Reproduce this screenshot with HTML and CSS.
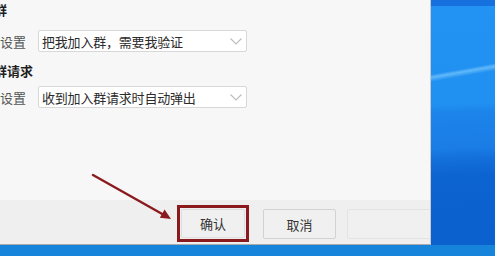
FILE: index.html
```html
<!DOCTYPE html>
<html lang="zh-CN">
<head>
<meta charset="utf-8">
<title>群设置</title>
<link rel="stylesheet" href="styles.css">
</head>
<body>
<div class="screen">
  <div class="dialog">
    <div class="body">
      <div class="heading first">群</div>
      <div class="row">
        <span class="label">设置</span>
        <div class="select">
          <span class="value">把我加入群，需要我验证</span>
          <svg class="chev" width="12" height="7" viewBox="0 0 12 7"><path d="M0.5 0.5 L6 6 L11.5 0.5" fill="none" stroke="#bdbdbd" stroke-width="1.2"/></svg>
        </div>
      </div>
      <div class="heading second">群请求</div>
      <div class="row row2">
        <span class="label">设置</span>
        <div class="select">
          <span class="value">收到加入群请求时自动弹出</span>
          <svg class="chev" width="12" height="7" viewBox="0 0 12 7"><path d="M0.5 0.5 L6 6 L11.5 0.5" fill="none" stroke="#bdbdbd" stroke-width="1.2"/></svg>
        </div>
      </div>
    </div>
    <div class="footer">
      <div class="hl"><div class="btn ok">确认</div></div>
      <div class="btn cancel">取消</div>
      <div class="btn third"></div>
    </div>
  </div>
  <svg class="arrow" width="495" height="256" viewBox="0 0 495 256">
    <line x1="93" y1="175" x2="164" y2="215" stroke="#8b1a1e" stroke-width="2.4" stroke-linecap="round"/>
    <polygon points="171,219 159.8,217.8 164.6,209.4" fill="#8b1a1e"/>
  </svg>
</div>
</body>
</html>
```
FILE: styles.css
```css
html, body {
  margin: 0;
  padding: 0;
}
body {
  font-family: "Noto Sans CJK SC", "Microsoft YaHei", "Noto Sans", sans-serif;
  font-size: 13px;
  color: #333;
}
.screen {
  position: relative;
  width: 495px;
  height: 256px;
  overflow: hidden;
  background:
    linear-gradient(to bottom, #1670dd 0, #1670dd 6px, transparent 6px),
    linear-gradient(to right, transparent 0, transparent 100%) ,
    linear-gradient(to bottom, transparent 0, transparent 245px, rgba(0, 0, 0, 0) 245px),
    linear-gradient(170deg, transparent 0, transparent 43.8%, rgba(140, 210, 255, 0.6) 44.7%, transparent 46%, transparent 100%),
    linear-gradient(to bottom, transparent 0, transparent 245px, #1684da 245px),
    linear-gradient(178deg, #2394f3 0%, #2090f1 44%, #1c84ea 47%, #1a7de5 60%, #136fdb 64%, #0c64d0 70%, #0a60cc 100%);
}
.dialog {
  width: 430px;
  height: 244px;
  background: #f7f7f7;
  border-right: 1px solid #c9c9c9;
  border-bottom: 1px solid #a9a9a9;
  display: flex;
  flex-direction: column;
  overflow: hidden;
}
.body {
  height: 200px;
  display: flex;
  flex-direction: column;
}
.heading {
  font-weight: bold;
  color: #1f1f1f;
  line-height: 20px;
  margin-left: -6px;
  white-space: nowrap;
}
.heading.second {
  margin-top: 9px;
}
.row {
  display: flex;
  align-items: center;
  margin-top: 10px;
}
.row2 {
  margin-top: 5px;
}
.label {
  width: 26px;
  text-align: right;
  color: #555;
  margin-right: 12px;
  white-space: nowrap;
}
.select {
  box-sizing: border-box;
  width: 209px;
  height: 22px;
  background: #fff;
  border: 1px solid #d8d8d8;
  border-radius: 2px;
  display: flex;
  align-items: center;
  justify-content: space-between;
  padding: 0 4px 0 3px;
}
.value {
  color: #2b2b2b;
  letter-spacing: -0.2px;
  white-space: nowrap;
}
.chev {
  display: block;
}
.footer {
  flex: 1;
  background: #efefef;
  display: flex;
  align-items: flex-start;
  padding: 5px 0 0 177px;
}
.hl {
  border: 3px solid #8b1a1e;
  padding: 1px;
}
.btn {
  box-sizing: border-box;
  display: flex;
  align-items: center;
  justify-content: center;
  background: #f0f0f0;
  border: 1px solid #d2d2d2;
  border-radius: 2px;
  color: #333;
  flex-shrink: 0;
}
.btn.ok {
  width: 64px;
  height: 29px;
  border-color: #dedede;
}
.btn.cancel {
  width: 73px;
  height: 30px;
  margin: 4px 0 0 14px;
}
.btn.third {
  width: 90px;
  height: 30px;
  margin: 4px 0 0 11px;
  border-color: #e3e3e3;
}
.arrow {
  position: absolute;
  left: 0;
  top: 0;
  pointer-events: none;
}
```
